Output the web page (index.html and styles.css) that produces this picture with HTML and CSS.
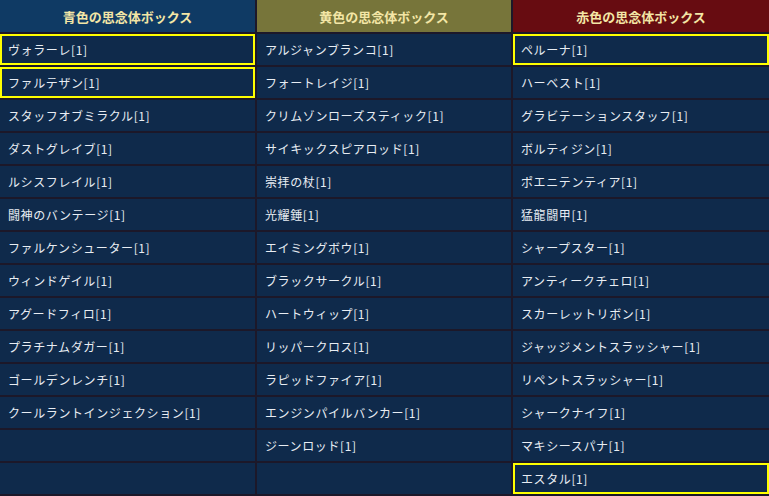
FILE: index.html
```html
<!DOCTYPE html>
<html lang="ja">
<head>
    <meta charset="UTF-8">
    <title>思念体ボックス</title>
    <link rel="stylesheet" href="styles.css">
</head>
<body>
    <div class="boxes">
        <div class="head blue">青色の思念体ボックス</div>
        <div class="head yellow">黄色の思念体ボックス</div>
        <div class="head red">赤色の思念体ボックス</div>

        <div class="cell mark">ヴォラーレ[1]</div>
        <div class="cell">アルジャンブランコ[1]</div>
        <div class="cell mark">ペルーナ[1]</div>

        <div class="cell mark">ファルテザン[1]</div>
        <div class="cell">フォートレイジ[1]</div>
        <div class="cell">ハーベスト[1]</div>

        <div class="cell">スタッフオブミラクル[1]</div>
        <div class="cell">クリムゾンローズスティック[1]</div>
        <div class="cell">グラビテーションスタッフ[1]</div>

        <div class="cell">ダストグレイブ[1]</div>
        <div class="cell">サイキックスピアロッド[1]</div>
        <div class="cell">ボルティジン[1]</div>

        <div class="cell">ルシスフレイル[1]</div>
        <div class="cell">崇拝の杖[1]</div>
        <div class="cell">ポエニテンティア[1]</div>

        <div class="cell">闘神のバンテージ[1]</div>
        <div class="cell">光耀錘[1]</div>
        <div class="cell">猛龍闘甲[1]</div>

        <div class="cell">ファルケンシューター[1]</div>
        <div class="cell">エイミングボウ[1]</div>
        <div class="cell">シャープスター[1]</div>

        <div class="cell">ウィンドゲイル[1]</div>
        <div class="cell">ブラックサークル[1]</div>
        <div class="cell">アンティークチェロ[1]</div>

        <div class="cell">アグードフィロ[1]</div>
        <div class="cell">ハートウィップ[1]</div>
        <div class="cell">スカーレットリボン[1]</div>

        <div class="cell">プラチナムダガー[1]</div>
        <div class="cell">リッパークロス[1]</div>
        <div class="cell">ジャッジメントスラッシャー[1]</div>

        <div class="cell">ゴールデンレンチ[1]</div>
        <div class="cell">ラピッドファイア[1]</div>
        <div class="cell">リペントスラッシャー[1]</div>

        <div class="cell">クールラントインジェクション[1]</div>
        <div class="cell">エンジンパイルバンカー[1]</div>
        <div class="cell">シャークナイフ[1]</div>

        <div class="cell"></div>
        <div class="cell">ジーンロッド[1]</div>
        <div class="cell">マキシースパナ[1]</div>

        <div class="cell"></div>
        <div class="cell"></div>
        <div class="cell mark">エスタル[1]</div>
    </div>
</body>
</html>
```

FILE: styles.css
```css
body {
    margin: 0;
    padding: 0;
    background-color: #1c1829;
    font-family: "Noto Sans CJK JP", "Noto Sans", sans-serif;
    overflow: hidden;
}
.boxes {
    display: grid;
    grid-template-columns: 255px 254px 256px;
    grid-template-rows: 32px;
    grid-auto-rows: 31px;
    gap: 2px;
    width: 769px;
}
.head {
    display: flex;
    align-items: center;
    justify-content: center;
    font-size: 13px;
    font-weight: bold;
    color: #f3e6a6;
}
.blue {
    background-color: #0f3a64;
}
.yellow {
    background-color: #77753a;
}
.red {
    background-color: #670c11;
}
.cell {
    display: flex;
    align-items: center;
    padding-left: 8px;
    font-size: 12px;
    letter-spacing: 0.6px;
    color: #e8edf3;
    background-color: #0f2a4b;
    box-sizing: border-box;
}
.mark {
    border: 2px solid #ffff00;
    padding-left: 6px;
}
```
